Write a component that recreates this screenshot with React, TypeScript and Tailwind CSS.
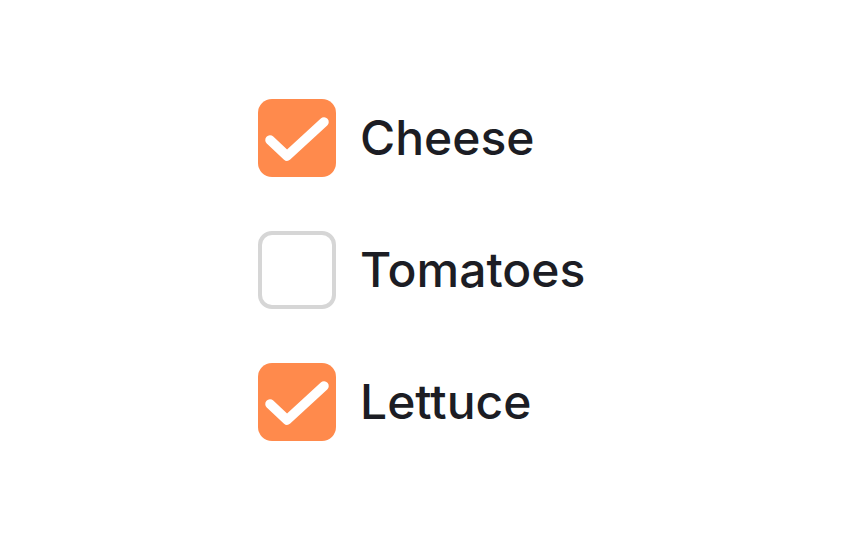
import React from "react";

function Box({ checked }: { checked: boolean }) {
  if (checked) {
    return (
      <div className="w-[78px] h-[78px] rounded-[14px] bg-[#ff8a4c] flex items-center justify-center shrink-0">
        <svg width="78" height="78" viewBox="0 0 78 78">
          <path d="M12 41 L29 57 L66 23" fill="none" stroke="white" strokeWidth="9.5" strokeLinecap="round" strokeLinejoin="round" />
        </svg>
      </div>
    );
  }
  return <div className="w-[78px] h-[78px] rounded-[14px] border-4 border-[#d6d6d6] bg-white shrink-0" />;
}

export default function App() {
  const items = [
    { label: "Cheese", checked: true },
    { label: "Tomatoes", checked: false },
    { label: "Lettuce", checked: true },
  ];
  return (
    <div className="w-[864px] h-[540px] bg-white flex flex-col gap-[54px] pl-[258px] pt-[99px]" style={{ fontFamily: "Inter, sans-serif" }}>
      {items.map((it) => (
        <div key={it.label} className="flex items-center gap-[24px]">
          <Box checked={it.checked} />
          <span className="text-[48px] text-[#1c1d24] font-medium leading-none">{it.label}</span>
        </div>
      ))}
    </div>
  );
}
